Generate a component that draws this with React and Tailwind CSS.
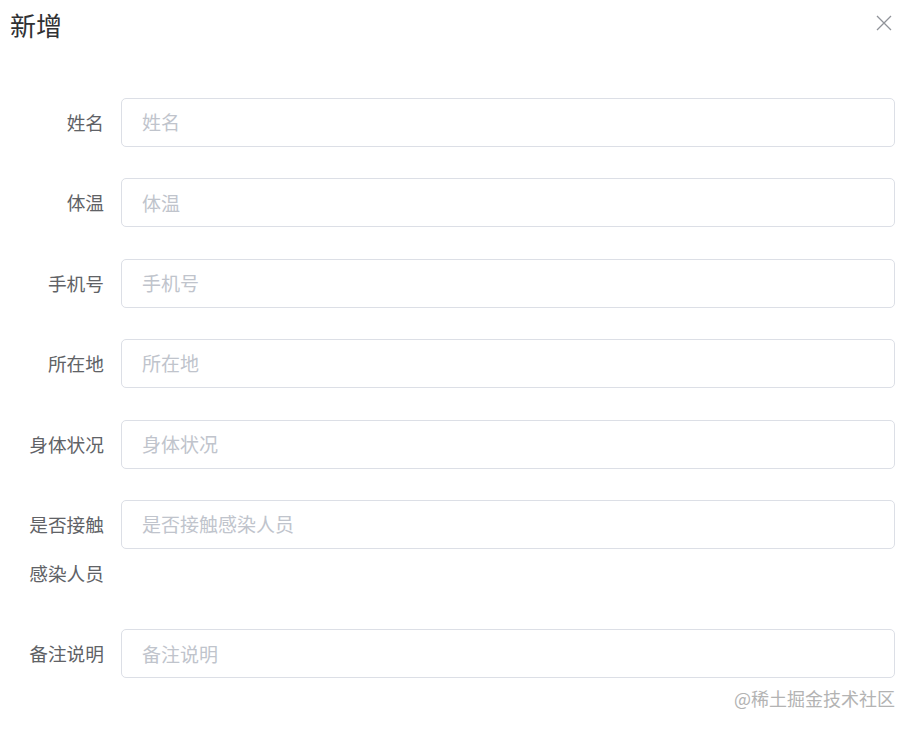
import React from "react";

const rows = [
  { label: ["姓名"], ph: "姓名" },
  { label: ["体温"], ph: "体温" },
  { label: ["手机号"], ph: "手机号" },
  { label: ["所在地"], ph: "所在地" },
  { label: ["身体状况"], ph: "身体状况" },
  { label: ["是否接触", "感染人员"], ph: "是否接触感染人员" },
  { label: ["备注说明"], ph: "备注说明" },
];

export default function App() {
  return (
    <div
      className="relative w-[917px] h-[730px] bg-white overflow-hidden"
      style={{ fontFamily: '"Noto Sans CJK SC", "Noto Sans", sans-serif' }}
    >
      <div className="h-[48px] flex items-center pl-[10px] text-[26px] text-[#303133]">
        新增
      </div>
      <svg
        className="absolute left-[876px] top-[15px]"
        width="16"
        height="16"
        viewBox="0 0 16 16"
      >
        <path d="M1 1 L15 15 M15 1 L1 15" stroke="#909399" strokeWidth="1.3" fill="none" />
      </svg>
      <div className="pt-[50px] pl-[10px] pr-[22px]">
        {rows.map((r, i) => (
          <div key={i} className="flex mb-[31.4px]">
            <div className="w-[111px] shrink-0 pr-[17px] text-right text-[18.7px] leading-[48px] text-[#606266] whitespace-nowrap">
              {r.label.map((l, j) => (
                <div key={j} className={j > 0 ? "mt-[1px] mb-[1px]" : ""}>{l}</div>
              ))}
            </div>
            <div className="flex-1 h-[49px] border border-[#dcdfe6] rounded-[5px] flex items-center pl-[20px] text-[19px] text-[#c0c4cc]">
              {r.ph}
            </div>
          </div>
        ))}
      </div>
      <div className="absolute right-[22px] top-[685px] text-[18px] leading-[26px] text-[#b3b3b3]">
        @稀土掘金技术社区
      </div>
    </div>
  );
}
